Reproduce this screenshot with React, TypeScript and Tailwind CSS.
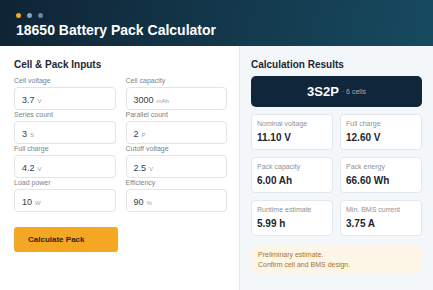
const INPUTS: [string, string, string][] = [
  ["Cell voltage", "3.7", "V"],
  ["Cell capacity", "3000", "mAh"],
  ["Series count", "3", "S"],
  ["Parallel count", "2", "P"],
  ["Full charge", "4.2", "V"],
  ["Cutoff voltage", "2.5", "V"],
  ["Load power", "10", "W"],
  ["Efficiency", "90", "%"],
];

const RESULTS: [string, string][] = [
  ["Nominal voltage", "11.10 V"],
  ["Full charge", "12.60 V"],
  ["Pack capacity", "6.00 Ah"],
  ["Pack energy", "66.60 Wh"],
  ["Runtime estimate", "5.99 h"],
  ["Min. BMS current", "3.75 A"],
];

export default function App() {
  return (
    <div className="flex h-[290px] w-[433px] flex-col overflow-hidden bg-white font-['Liberation_Sans',Arial,sans-serif]">
      <header className="h-[46px] shrink-0 bg-[linear-gradient(100deg,#0f2435,#174a60)] px-[16px] pt-[13px]">
        <div className="flex gap-[6px]">
          <span className="h-[5px] w-[5px] rounded-full bg-[#f5a623]" />
          <span className="h-[5px] w-[5px] rounded-full bg-[#7fa8bc]" />
          <span className="h-[5px] w-[5px] rounded-full bg-[#5f8ca2]" />
        </div>
        <h1 className="mt-[4px] text-[14px] font-bold leading-[16px] text-white">18650 Battery Pack Calculator</h1>
      </header>
      <div className="flex min-h-0 flex-1">
        <section className="w-[239px] shrink-0 pl-[14px] pr-[12px] pt-[13px]">
          <h2 className="text-[10px] font-bold leading-[12px] text-[#1c2733]">Cell &amp; Pack Inputs</h2>
          <div className="mt-[5px] grid grid-cols-2 gap-x-[10px]">
            {INPUTS.map(([label, value, unit]) => (
              <Field key={label} label={label} value={value} unit={unit} />
            ))}
          </div>
          <button className="mt-[15px] flex h-[25px] w-[104px] items-center rounded-[3px] bg-[#f5a623] px-[14px] text-[8px] font-bold text-[#2a2622]">
            Calculate Pack
          </button>
        </section>
        <section className="flex-1 border-l border-[#e3e8ec] bg-[#f4f7f9] px-[11px] pt-[13px]">
          <h2 className="text-[10px] font-bold leading-[12px] text-[#1c2733]">Calculation Results</h2>
          <div className="mt-[5px] flex h-[31px] items-center justify-center gap-[3px] rounded-[5px] bg-[#10263a]">
            <span className="text-[13px] font-bold text-white">3S2P</span>
            <span className="pt-[2px] text-[7px] text-[#9fb0bf]">· 6 cells</span>
          </div>
          <div className="mt-[7px] grid grid-cols-2 gap-[7px]">
            {RESULTS.map(([label, value]) => (
              <div key={label} className="h-[36px] rounded-[4px] border border-[#e2e8ed] bg-white px-[5px] pt-[4px]">
                <div className="text-[7px] leading-[9px] text-[#8b949c]">{label}</div>
                <div className="mt-[4px] text-[10px] font-bold leading-[12px] text-[#1b2631]">{value}</div>
              </div>
            ))}
          </div>
          <div className="mt-[10px] h-[28px] rounded-[4px] bg-[#fdf5e6] px-[7px] pt-[4px] text-[7px] leading-[10px] text-[#a3762e]">
            <div>Preliminary estimate.</div>
            <div>Confirm cell and BMS design.</div>
          </div>
        </section>
      </div>
    </div>
  );
}

function Field({ label, value, unit }: { label: string; value: string; unit: string }) {
  return (
    <label className="block">
      <span className="block h-[11px] text-[7px] leading-[10px] text-[#7a838c]">{label}</span>
      <span className="flex h-[23px] items-baseline rounded-[4px] border border-[#dfe5ea] bg-white px-[7px] pt-[7px]">
        <span className="text-[9px] leading-[11px] text-[#333d47]">{value}</span>
        <span className="ml-[3px] text-[6px] text-[#9aa3ab]">{unit}</span>
      </span>
    </label>
  );
}
